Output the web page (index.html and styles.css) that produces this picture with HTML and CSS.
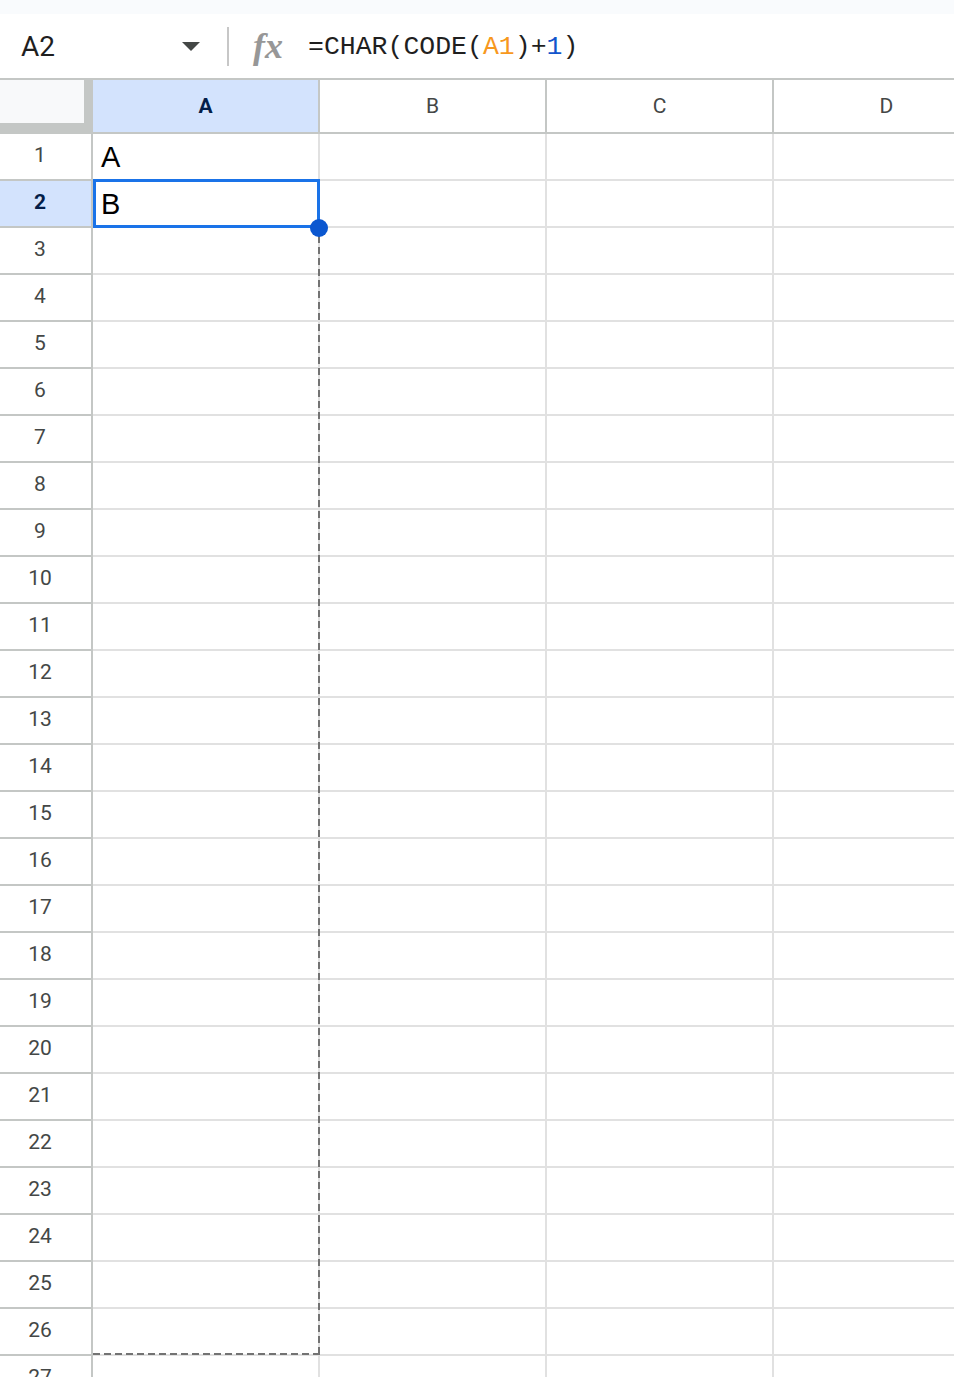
FILE: index.html
```html
<!DOCTYPE html>
<html lang="en">

<head>
    <meta charset="UTF-8" />
    <meta name="viewport" content="width=device-width, initial-scale=1.0" />
    <title>Sheet1</title>
    <link rel="stylesheet" href="styles.css">
</head>

<body>
    <div class="top"></div>

    <!-- 名称框 + 公式栏 -->
    <div class="fbar">
        <div class="namebox">
            <span>A2</span>
            <i class="caret"></i>
        </div>
        <span class="sep"></span>
        <span class="fx">fx</span>
        <div class="formula">=CHAR(CODE(<span class="ref">A1</span>)+<span class="num">1</span>)</div>
    </div>

    <!-- 表格 -->
    <div class="sheet">
        <div class="corner"></div>
        <div class="colh on">A</div>
        <div class="colh">B</div>
        <div class="colh">C</div>
        <div class="colh">D</div>

        <div class="rowh">1</div><div class="cell">A</div><div class="cell"></div><div class="cell"></div><div class="cell"></div>
        <div class="rowh on">2</div>
        <div class="cell sel">B
            <!-- 拖动填充的虚线范围 A2:A26 -->
            <div class="fill"></div>
            <div class="selbox"><span class="handle"></span></div>
        </div>
        <div class="cell"></div><div class="cell"></div><div class="cell"></div>
        <div class="rowh">3</div><div class="cell"></div><div class="cell"></div><div class="cell"></div><div class="cell"></div>
        <div class="rowh">4</div><div class="cell"></div><div class="cell"></div><div class="cell"></div><div class="cell"></div>
        <div class="rowh">5</div><div class="cell"></div><div class="cell"></div><div class="cell"></div><div class="cell"></div>
        <div class="rowh">6</div><div class="cell"></div><div class="cell"></div><div class="cell"></div><div class="cell"></div>
        <div class="rowh">7</div><div class="cell"></div><div class="cell"></div><div class="cell"></div><div class="cell"></div>
        <div class="rowh">8</div><div class="cell"></div><div class="cell"></div><div class="cell"></div><div class="cell"></div>
        <div class="rowh">9</div><div class="cell"></div><div class="cell"></div><div class="cell"></div><div class="cell"></div>
        <div class="rowh">10</div><div class="cell"></div><div class="cell"></div><div class="cell"></div><div class="cell"></div>
        <div class="rowh">11</div><div class="cell"></div><div class="cell"></div><div class="cell"></div><div class="cell"></div>
        <div class="rowh">12</div><div class="cell"></div><div class="cell"></div><div class="cell"></div><div class="cell"></div>
        <div class="rowh">13</div><div class="cell"></div><div class="cell"></div><div class="cell"></div><div class="cell"></div>
        <div class="rowh">14</div><div class="cell"></div><div class="cell"></div><div class="cell"></div><div class="cell"></div>
        <div class="rowh">15</div><div class="cell"></div><div class="cell"></div><div class="cell"></div><div class="cell"></div>
        <div class="rowh">16</div><div class="cell"></div><div class="cell"></div><div class="cell"></div><div class="cell"></div>
        <div class="rowh">17</div><div class="cell"></div><div class="cell"></div><div class="cell"></div><div class="cell"></div>
        <div class="rowh">18</div><div class="cell"></div><div class="cell"></div><div class="cell"></div><div class="cell"></div>
        <div class="rowh">19</div><div class="cell"></div><div class="cell"></div><div class="cell"></div><div class="cell"></div>
        <div class="rowh">20</div><div class="cell"></div><div class="cell"></div><div class="cell"></div><div class="cell"></div>
        <div class="rowh">21</div><div class="cell"></div><div class="cell"></div><div class="cell"></div><div class="cell"></div>
        <div class="rowh">22</div><div class="cell"></div><div class="cell"></div><div class="cell"></div><div class="cell"></div>
        <div class="rowh">23</div><div class="cell"></div><div class="cell"></div><div class="cell"></div><div class="cell"></div>
        <div class="rowh">24</div><div class="cell"></div><div class="cell"></div><div class="cell"></div><div class="cell"></div>
        <div class="rowh">25</div><div class="cell"></div><div class="cell"></div><div class="cell"></div><div class="cell"></div>
        <div class="rowh">26</div><div class="cell"></div><div class="cell"></div><div class="cell"></div><div class="cell"></div>
        <div class="rowh">27</div><div class="cell"></div><div class="cell"></div><div class="cell"></div><div class="cell"></div>
    </div>
</body>

</html>
```

FILE: styles.css
```css
* {
    margin: 0;
    padding: 0;
    box-sizing: border-box;
}

body {
    width: 954px;
    height: 1377px;
    overflow: hidden;
    background: #fff;
    font-family: Roboto, "Liberation Sans", Arial, sans-serif;
    color: #1f1f1f;
}

.top {
    height: 14px;
    background: #f9fbfd;
}

/* 公式栏 */
.fbar {
    height: 64px;
    display: flex;
    align-items: center;
}

.namebox {
    width: 227px;
    display: flex;
    align-items: center;
    justify-content: space-between;
    padding: 0 27px 0 21px;
    font-size: 28px;
}

.caret {
    border-left: 9px solid transparent;
    border-right: 9px solid transparent;
    border-top: 9px solid #444746;
}

.sep {
    width: 2px;
    height: 39px;
    background: #c7c7c7;
}

.fx {
    width: 32px;
    margin-left: 24px;
    font: italic bold 36px "Liberation Serif", serif;
    color: #979797;
    line-height: 1;
}

.formula {
    margin-left: 23px;
    padding-top: 2px;
    font: 26.5px "Liberation Mono", "DejaVu Sans Mono", monospace;
    color: #1f1f1f;
}

.formula .ref {
    color: #f7981d;
}

.formula .num {
    color: #1155cc;
}

/* 表格 */
.sheet {
    display: grid;
    grid-template-columns: 93px repeat(4, 227px);
    grid-template-rows: 54px;
    grid-auto-rows: 47px;
    border-top: 2px solid #c4c7c5;
}

.corner {
    background: #f8f9fa;
    border-right: 9px solid #c4c7c5;
    border-bottom: 11px solid #c4c7c5;
}

.colh,
.rowh {
    display: flex;
    align-items: center;
    justify-content: center;
    border-right: 2px solid #c4c7c5;
    border-bottom: 2px solid #c4c7c5;
    font-size: 21px;
    color: #444746;
    background: #fff;
}

.rowh {
    padding: 0 11px 3px 0;
}

.colh.on,
.rowh.on {
    background: #d3e3fd;
    color: #041e49;
    font-weight: bold;
}

.cell {
    border-right: 2px solid #e1e1e1;
    border-bottom: 2px solid #e1e1e1;
    padding: 2px 8px 0;
    font: 29px/42px "Liberation Sans", Arial, sans-serif;
    color: #000;
}

.cell.sel {
    position: relative;
}

.selbox {
    position: absolute;
    top: -2px;
    left: 0;
    right: -2px;
    bottom: -2px;
    border: 3px solid #1a73e8;
    z-index: 3;
}

.selbox .handle {
    position: absolute;
    right: -11px;
    bottom: -12px;
    width: 18px;
    height: 18px;
    border-radius: 50%;
    background: #0b57d0;
}

/* 虚线框，往下盖住 25 行 */
.fill {
    position: absolute;
    top: 0;
    left: 0;
    right: -2px;
    height: 1174px;
    z-index: 2;
    pointer-events: none;
    background:
        repeating-linear-gradient(to bottom, #737373 0 7px, transparent 7px 11px) right top / 2px 100% no-repeat,
        repeating-linear-gradient(to right, #737373 0 7px, transparent 7px 11px) left bottom / 100% 2px no-repeat;
}
```
